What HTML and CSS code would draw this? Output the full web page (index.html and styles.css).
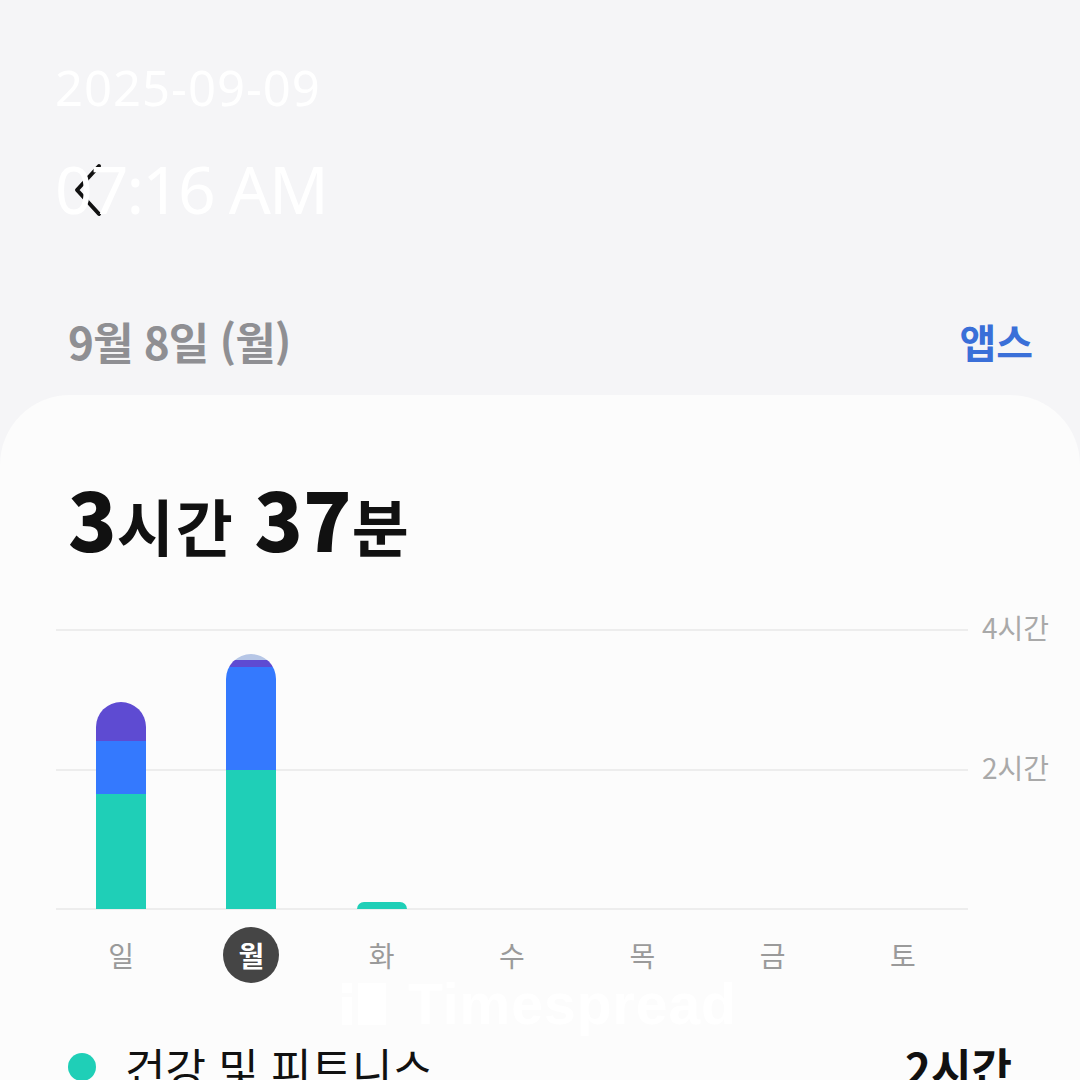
FILE: index.html
```html
<!DOCTYPE html>
<html lang="ko">
<head>
    <meta charset="UTF-8">
    <meta name="viewport" content="width=device-width, initial-scale=1.0">
    <title>디지털 웰빙</title>
    <link rel="stylesheet" href="styles.css">
</head>
<body>
    <div class="topbar">
        <svg class="back" width="34" height="56" viewBox="0 0 34 56">
            <path d="M27 4 L5 28 L27 52" fill="none" stroke="#111" stroke-width="4" stroke-linecap="round" stroke-linejoin="round"/>
        </svg>
    </div>

    <!-- camera timestamp overlay -->
    <div class="stamp">
        <div class="stamp-date">2025-09-09</div>
        <div class="stamp-time">07:16 AM</div>
    </div>

    <div class="date-row">
        <span class="date">9월 8일 (월)</span>
        <a class="apps" href="#">앱스</a>
    </div>

    <div class="card">
        <div class="total"><b>3</b>시간 <b>37</b>분</div>

        <div class="chart">
            <div class="grid-line top"><span>4시간</span></div>
            <div class="grid-line mid"><span>2시간</span></div>
            <div class="grid-line base"></div>

            <div class="col">
                <div class="bar">
                    <div class="seg purple" style="height: 39px"></div>
                    <div class="seg blue" style="height: 53px"></div>
                    <div class="seg teal" style="height: 115px"></div>
                </div>
            </div>
            <div class="col">
                <div class="bar">
                    <div class="seg pale" style="height: 6px"></div>
                    <div class="seg purple" style="height: 7px"></div>
                    <div class="seg blue" style="height: 103px"></div>
                    <div class="seg teal" style="height: 139px"></div>
                </div>
            </div>
            <div class="col">
                <div class="bar small">
                    <div class="seg teal" style="height: 7px"></div>
                </div>
            </div>
            <div class="col"></div>
            <div class="col"></div>
            <div class="col"></div>
            <div class="col"></div>
        </div>

        <div class="days">
            <span>일</span>
            <span class="today">월</span>
            <span>화</span>
            <span>수</span>
            <span>목</span>
            <span>금</span>
            <span>토</span>
        </div>

        <div class="watermark"><span class="wm-icon"></span>Timespread</div>

        <div class="legend-row">
            <span class="dot"></span>
            <span class="cat">건강 및 피트니스</span>
            <span class="time">2시간</span>
        </div>
    </div>
</body>
</html>
```

FILE: styles.css
```css
body {
    margin: 0;
    padding: 0;
    font-family: "Noto Sans CJK KR", "Noto Sans", sans-serif;
    background-color: #f5f5f7;
    height: 1080px;
    overflow: hidden;
    position: relative;
}

.topbar {
    height: 290px;
    padding-left: 72px;
    box-sizing: border-box;
    padding-top: 162px;
}

.back {
    display: block;
}

.stamp {
    position: absolute;
    top: 54px;
    left: 55px;
    color: #fff;
    font-family: "Noto Sans", sans-serif;
}

.stamp-date {
    font-size: 49px;
    line-height: 66px;
    letter-spacing: 1px;
}

.stamp-time {
    font-size: 66px;
    line-height: 84px;
    margin-top: 26px;
    letter-spacing: -2px;
}

.date-row {
    height: 105px;
    display: flex;
    align-items: flex-start;
    justify-content: space-between;
    padding: 19px 47px 0 68px;
    box-sizing: border-box;
}

.date {
    font-size: 44px;
    font-weight: 700;
    color: #8f8f93;
    letter-spacing: -1px;
}

.apps {
    font-size: 40px;
    font-weight: 700;
    color: #3a6fd8;
    text-decoration: none;
    margin-top: 3px;
}

.card {
    background-color: #fcfcfc;
    border-radius: 70px 70px 0 0;
    height: 700px;
    padding-top: 72px;
    box-sizing: border-box;
    position: relative;
}

.total {
    margin-left: 68px;
    font-size: 62px;
    font-weight: 700;
    color: #111;
    line-height: 100px;
    height: 100px;
    letter-spacing: 2px;
}

.total b {
    font-size: 80px;
    letter-spacing: 0;
}

.chart {
    position: relative;
    margin: 63px 0 0 56px;
    width: 912px;
    height: 279px;
    display: grid;
    grid-template-columns: repeat(7, 1fr);
    align-items: end;
}

.grid-line {
    position: absolute;
    left: 0;
    width: 912px;
    border-top: 2px solid #ededed;
}

.grid-line.top { top: -1px; }
.grid-line.mid { top: 139px; }
.grid-line.base { top: 278px; }

.grid-line span {
    position: absolute;
    left: 926px;
    top: -24px;
    font-size: 28px;
    color: #a9a9a9;
    white-space: nowrap;
}

.col {
    display: flex;
    justify-content: center;
    position: relative;
}

.bar {
    width: 50px;
    border-radius: 25px 25px 0 0;
    overflow: hidden;
    display: flex;
    flex-direction: column;
}

.bar.small {
    border-radius: 12px 12px 0 0;
}

.seg.teal { background: #1fcfb7; }
.seg.blue { background: #3479fe; }
.seg.purple { background: #5e4bd2; }
.seg.pale { background: #b6c6e6; }

.days {
    margin-left: 56px;
    width: 912px;
    display: grid;
    grid-template-columns: repeat(7, 1fr);
    justify-items: center;
    padding-top: 18px;
}

.days span {
    width: 56px;
    height: 56px;
    line-height: 56px;
    text-align: center;
    font-size: 28px;
    color: #9a9a9a;
}

.days .today {
    background: #454545;
    color: #fff;
    font-weight: 700;
    border-radius: 50%;
}

.watermark {
    position: absolute;
    top: 576px;
    left: 342px;
    color: #fff;
    font-family: "Liberation Sans", Arial, sans-serif;
    font-weight: 700;
    font-size: 57px;
    letter-spacing: 1px;
    display: flex;
    align-items: center;
    gap: 22px;
}

.wm-icon {
    width: 44px;
    height: 42px;
    background:
        linear-gradient(#fff, #fff) 0 0 / 10px 10px no-repeat,
        linear-gradient(#fff, #fff) 0 14px / 10px 28px no-repeat,
        linear-gradient(#fff, #fff) 16px 0 / 28px 42px no-repeat;
}

.legend-row {
    display: flex;
    align-items: center;
    margin-top: 52px;
    padding: 0 68px;
}

.dot {
    width: 28px;
    height: 28px;
    border-radius: 50%;
    background: #1fcfb7;
    margin-right: 29px;
}

.cat {
    font-size: 44px;
    color: #111;
    flex: 1;
}

.time {
    font-size: 44px;
    font-weight: 700;
    color: #111;
}
```
